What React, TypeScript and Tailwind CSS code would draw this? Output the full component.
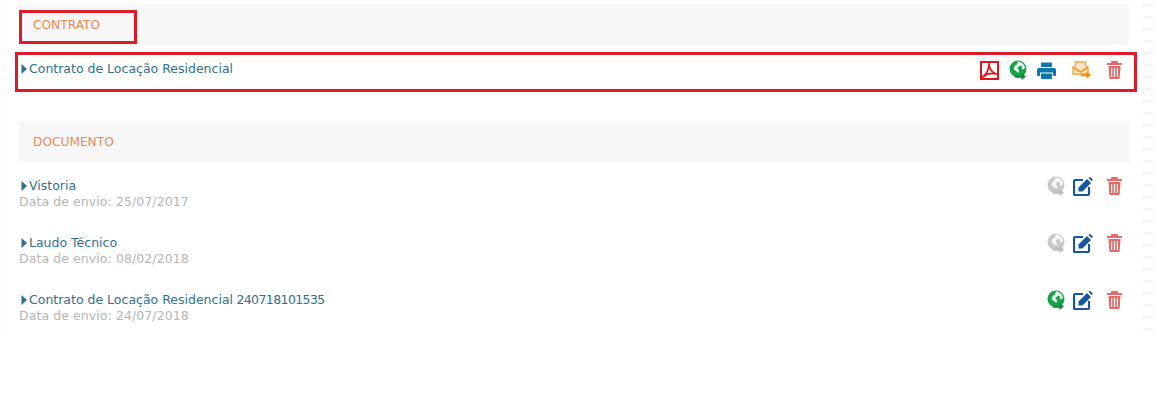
import React from "react";

const Caret = () => (
  <svg width="6" height="10" viewBox="0 0 6 10" className="shrink-0"><path d="M0.5 0 L6 5 L0.5 10 Z" fill="#2f6f8f" /></svg>
);
const Pdf = () => (
  <svg width="19" height="19" viewBox="0 0 19 19">
    <rect x="1" y="1" width="17" height="17" fill="#fff" stroke="#e0141c" strokeWidth="2" />
    <path d="M2.5 16 C6 13.5 9 8.5 9 2.5 C9.3 8 12 11.5 16.5 13 C12 11.8 7 12.5 2.5 16 Z" fill="none" stroke="#e0141c" strokeWidth="1.7" strokeLinejoin="round" />
  </svg>
);
const Globe = ({ c = "#17a34a", d = "#0c8a3e" }: { c?: string; d?: string }) => (
  <svg width="18" height="20" viewBox="0 0 18 20">
    <circle cx="9" cy="9" r="8.5" fill={c} />
    <path d="M9 1.5 C12 1.5 15.5 4 16 8 L14 9.5 L12.5 8.5 L13.5 7 L11.5 5.5 L8 8 L10 10 L9.5 13 L7.5 11.5 L4.5 9 L6 5.5 L7.5 5 Z" fill="#fff" opacity="0.92" />
    <path d="M6 15.5 L12.5 15.5 L12.5 13 L17 16.5 L12.5 20 L12.5 17.8 L6 17.8 Z" fill={d} />
  </svg>
);
const Printer = () => (
  <svg width="19" height="17" viewBox="0 0 19 17">
    <path d="M4.5 0.5 H14.5 Q15 0.5 15 1 V5 H4 V1 Q4 0.5 4.5 0.5 Z" fill="#0a76ad" />
    <path d="M2 6 H17 Q19 6 19 8 V13 Q19 14 18 14 H16 V10.5 H3 V14 H1 Q0 14 0 13 V8 Q0 6 2 6 Z" fill="#0a76ad" />
    <path d="M4 11.5 H15 V16 Q15 17 14 17 H5 Q4 17 4 16 Z" fill="#0a76ad" />
  </svg>
);
const MailSend = () => (
  <svg width="19" height="18" viewBox="0 0 19 18">
    <path d="M1 6 L3.5 4.5 V1 H13.5 V4.5 L16 6 V13 H1 Z" fill="#fde6c8" stroke="#f7a23b" strokeWidth="1.3" />
    <path d="M1 6.5 L8.5 11 L16 6.5" fill="none" stroke="#f7962b" strokeWidth="1.8" />
    <path d="M9 13.2 H14.5 V10.5 L19 14 L14.5 17.5 V15.2 H9 Z" fill="#f08c00" />
  </svg>
);
const Edit = () => (
  <svg width="20" height="19" viewBox="0 0 20 19">
    <path d="M10 3 H2.2 Q1 3 1 4.2 V16.8 Q1 18 2.2 18 H14.8 Q16 18 16 16.8 V10" fill="none" stroke="#15569e" strokeWidth="2.2" />
    <path d="M5.5 10.5 L14 2 L18 6 L9.5 14.5 L5.5 14.5 Z" fill="#15569e" />
    <path d="M15.5 1 L16.5 0 Q17 -0.2 17.5 0.2 L19.5 2.2 Q20 2.8 19.5 3.2 L18.5 4 Z" fill="#15569e" />
  </svg>
);
const Trash = () => (
  <svg width="15" height="18" viewBox="0 0 15 18">
    <path d="M5 2 V1 H10 V2 M0 3 H15" fill="none" stroke="#e46a6a" strokeWidth="1.8" />
    <path d="M1.5 5 H13.5 L12.7 17 Q12.6 18 11.7 18 H3.3 Q2.4 18 2.3 17 Z" fill="#e46a6a" />
    <path d="M4.6 7 V16 M7.5 7 V16 M10.4 7 V16" stroke="#fff" strokeWidth="1.2" />
  </svg>
);

const ticks = Array.from({ length: 28 }, (_, i) => i * 12 + 4);

const Section = ({ title }: { title: string }) => (
  <div className="h-[41px] bg-[#f7f7f7] pl-[14px] pt-[2px] flex items-center text-[12.2px] leading-none text-[#e58a55]">{title}</div>
);

const Doc = ({ name, digits, date, globe }: { name: string; digits?: string; date: string; globe: "gray" | "green" }) => (
  <div className="h-[57px] flex justify-between items-start">
    <div>
      <div className="flex items-center gap-[2px] h-[16px] pl-[2px] text-[#2f6f8f]">
        <Caret />
        <span>{name}{digits && <span className="tracking-[-0.6px]"> {digits}</span>}</span>
      </div>
      <div className="h-[16px] leading-[16px] text-[#b5b5b5] tracking-[0.08px]">Data de envio: {date}</div>
    </div>
    <div className="flex items-center gap-[8px] pr-[7px] -mt-[2px]">
      {globe === "gray" ? <Globe c="#c9c9c9" d="#bdbdbd" /> : <Globe />}
      <Edit />
      <span className="ml-[6px]"><Trash /></span>
    </div>
  </div>
);

export default function App() {
  return (
    <div className="relative w-[1155px] h-[416px] bg-white overflow-hidden text-[12.5px]" style={{ fontFamily: '"DejaVu Sans", Verdana, sans-serif' }}>
      <div className="pl-[19px] pr-[26px] pt-[4px]">
        <Section title="CONTRATO" />
        <div className="h-[76px] pt-[16px]">
          <div className="flex justify-between items-start">
            <div className="flex items-center gap-[2px] h-[16px] pl-[2px] text-[#2f6f8f]"><Caret /><span>Contrato de Locação Residencial</span></div>
            <div className="flex items-center pr-[7px] -mt-[1px]">
              <Pdf />
              <span className="ml-[10px]"><Globe /></span>
              <span className="ml-[10px]"><Printer /></span>
              <span className="ml-[16px]"><MailSend /></span>
              <span className="ml-[16px]"><Trash /></span>
            </div>
          </div>
        </div>
        <Section title="DOCUMENTO" />
        <div className="pt-[16px]">
          <Doc name="Vistoria" date="25/07/2017" globe="gray" />
          <Doc name="Laudo Técnico" date="08/02/2018" globe="gray" />
          <Doc name="Contrato de Locação Residencial" digits="240718101535" date="24/07/2018" globe="green" />
        </div>
      </div>
      <div className="absolute left-[19px] top-[10px] w-[118px] h-[34px] border-[3px] border-[#dc1c28]" />
      <div className="absolute left-[15px] top-[52px] w-[1122px] h-[40px] border-[3px] border-[#dc1c28]" />
      <svg className="absolute left-0 top-0" width="8" height="345" viewBox="0 0 8 345">
        {ticks.map((y) => (
          <path key={y} d={`M0 ${y + 5} L6 ${y}`} stroke="#f1f1f1" fill="none" />
        ))}
      </svg>
      <svg className="absolute right-0 top-0" width="12" height="345" viewBox="0 0 12 345">
        {ticks.map((y) => (
          <path key={y} d={`M0 ${y + 4} Q5 ${y - 3} 11 ${y + 3}`} stroke="#ececec" fill="none" />
        ))}
      </svg>
    </div>
  );
}
